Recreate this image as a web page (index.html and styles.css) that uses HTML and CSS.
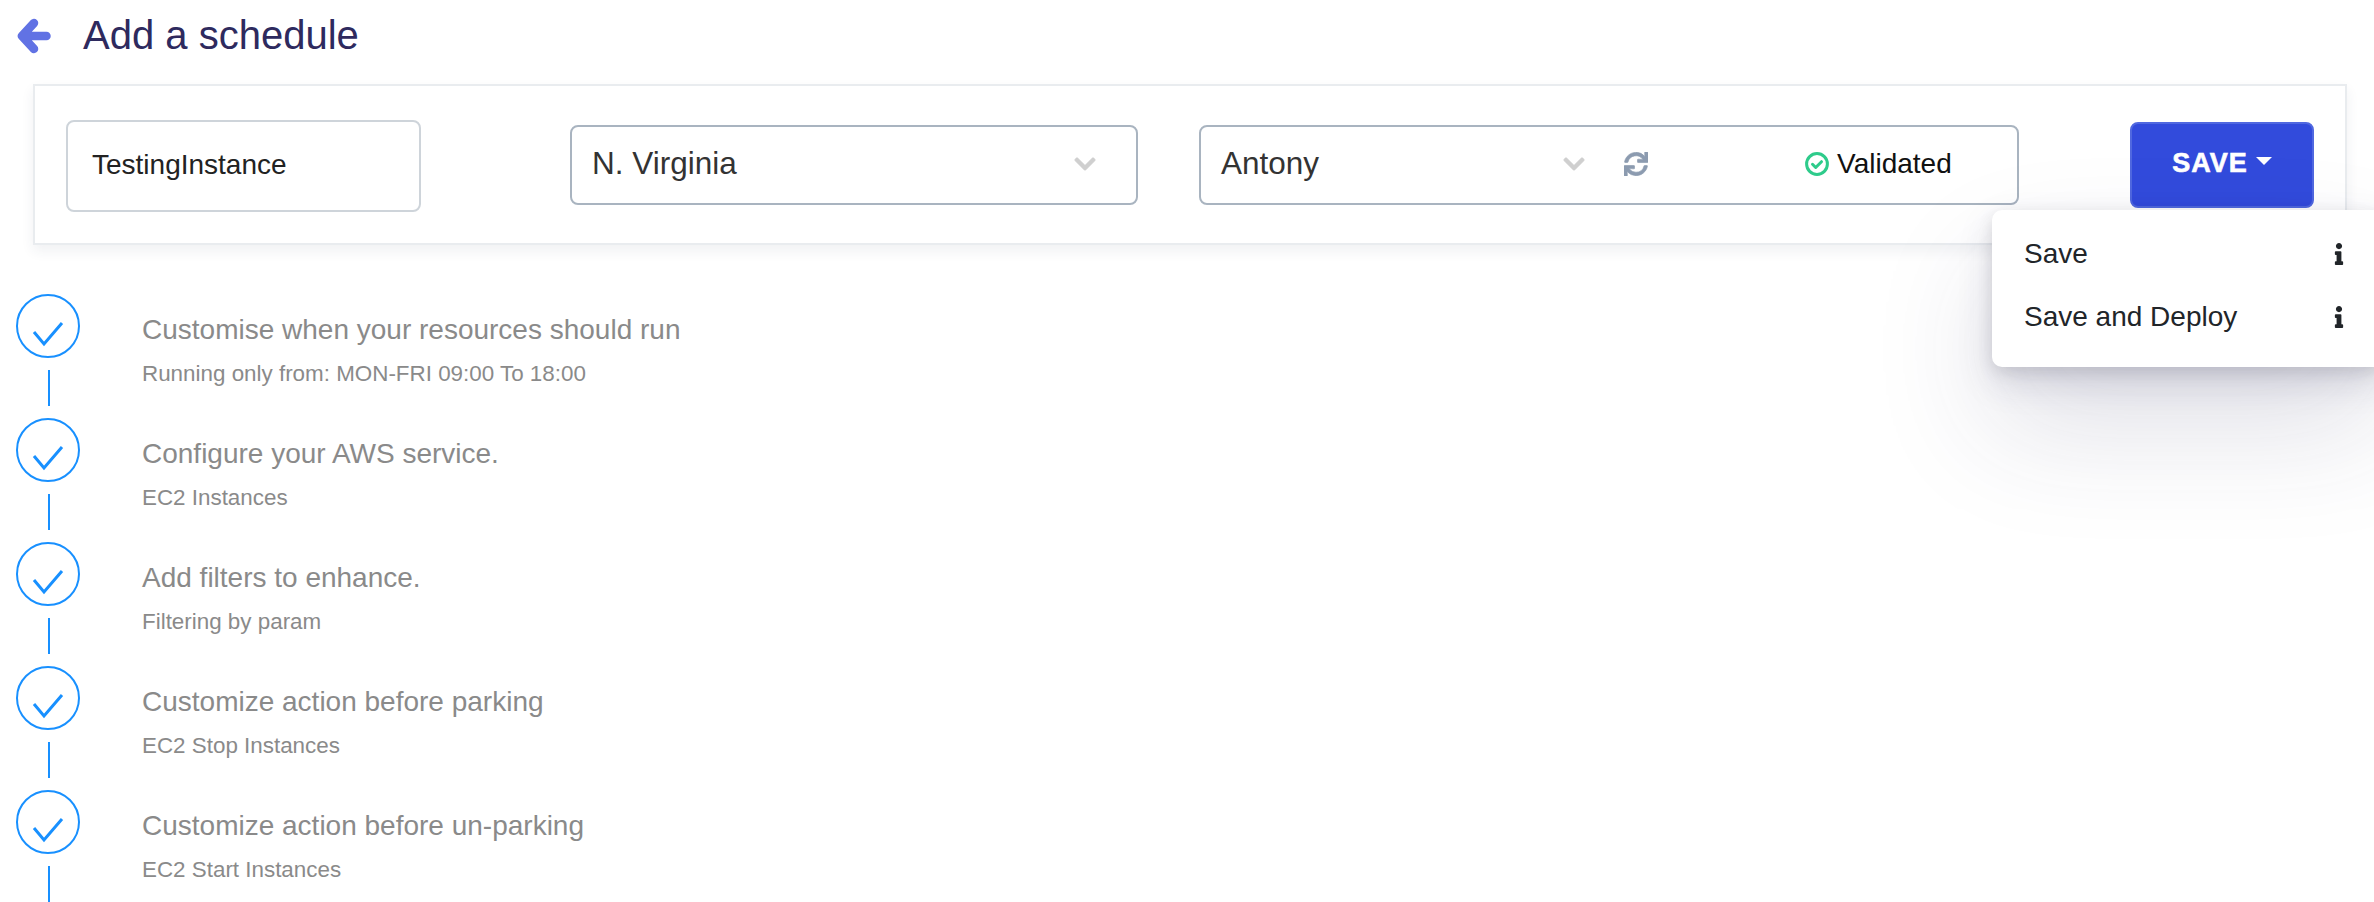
FILE: index.html
```html
<!DOCTYPE html>
<html lang="en">
<head>
<meta charset="utf-8">
<title>Add a schedule</title>
<link rel="stylesheet" href="styles.css">
</head>
<body>
<main class="page">
  <header class="head">
    <svg class="back" viewBox="0 0 34 36"><path d="M17 5L5 18l12 13M5 18h24.500"/></svg>
    <h1 class="title">Add a schedule</h1>
  </header>
  <section class="card">
    <div class="name-input">TestingInstance</div>
    <div class="select region">
      <span class="select-value">N. Virginia</span>
      <svg class="chev chev-region" viewBox="0 0 448 512"><path d="M207.029 381.476L12.686 187.132c-9.373-9.373-9.373-24.569 0-33.941l22.667-22.667c9.357-9.357 24.522-9.375 33.901-.04L224 284.505l154.745-154.021c9.379-9.335 24.544-9.317 33.901.04l22.667 22.667c9.373 9.373 9.373 24.569 0 33.941L240.971 381.476c-9.373 9.372-24.569 9.372-33.942 0z"/></svg>
    </div>
    <div class="select account">
      <span class="select-value">Antony</span>
      <svg class="chev chev-account" viewBox="0 0 448 512"><path d="M207.029 381.476L12.686 187.132c-9.373-9.373-9.373-24.569 0-33.941l22.667-22.667c9.357-9.357 24.522-9.375 33.901-.04L224 284.505l154.745-154.021c9.379-9.335 24.544-9.317 33.901.04l22.667 22.667c9.373 9.373 9.373 24.569 0 33.941L240.971 381.476c-9.373 9.372-24.569 9.372-33.942 0z"/></svg>
      <svg class="sync" viewBox="0 0 512 512"><path d="M440.65 12.57l4 82.77A247.16 247.16 0 0 0 255.83 8C134.73 8 33.91 94.92 12.29 209.82A12 12 0 0 0 24.09 224h49.05a12 12 0 0 0 11.67-9.26 175.91 175.91 0 0 1 317-56.94l-101.46-4.86a12 12 0 0 0-12.57 12v47.41a12 12 0 0 0 12 12H500a12 12 0 0 0 12-12V12a12 12 0 0 0-12-12h-47.37a12 12 0 0 0-11.98 12.57zM255.83 432a175.61 175.61 0 0 1-146-77.8l101.8 4.87a12 12 0 0 0 12.57-12v-47.4a12 12 0 0 0-12-12H12a12 12 0 0 0-12 12V500a12 12 0 0 0 12 12h47.35a12 12 0 0 0 12-12.6l-4.15-82.57A247.17 247.17 0 0 0 255.83 504c121.11 0 221.93-86.92 243.55-201.82a12 12 0 0 0-11.8-14.18h-49.05a12 12 0 0 0-11.67 9.26A175.86 175.86 0 0 1 255.83 432z"/></svg>
      <svg class="ok" viewBox="0 0 24 24"><circle cx="12" cy="12" r="10.400"/><path d="M7.500 12.300l3.200 3.200 5.800-5.800"/></svg>
      <span class="validated">Validated</span>
    </div>
    <button class="save" type="button">SAVE<span class="caret"></span></button>
  </section>
  <ol class="steps">
    <li class="step">
      <div class="rail"><span class="circle"><svg viewBox="0 0 60 60"><path d="M16 36l10 12 18-21"/></svg></span><span class="line"></span></div>
      <div class="step-text"><div class="step-title">Customise when your resources should run</div><div class="step-sub">Running only from: MON-FRI 09:00 To 18:00</div></div>
    </li>
    <li class="step">
      <div class="rail"><span class="circle"><svg viewBox="0 0 60 60"><path d="M16 36l10 12 18-21"/></svg></span><span class="line"></span></div>
      <div class="step-text"><div class="step-title">Configure your AWS service.</div><div class="step-sub">EC2 Instances</div></div>
    </li>
    <li class="step">
      <div class="rail"><span class="circle"><svg viewBox="0 0 60 60"><path d="M16 36l10 12 18-21"/></svg></span><span class="line"></span></div>
      <div class="step-text"><div class="step-title">Add filters to enhance.</div><div class="step-sub">Filtering by param</div></div>
    </li>
    <li class="step">
      <div class="rail"><span class="circle"><svg viewBox="0 0 60 60"><path d="M16 36l10 12 18-21"/></svg></span><span class="line"></span></div>
      <div class="step-text"><div class="step-title">Customize action before parking</div><div class="step-sub">EC2 Stop Instances</div></div>
    </li>
    <li class="step">
      <div class="rail"><span class="circle"><svg viewBox="0 0 60 60"><path d="M16 36l10 12 18-21"/></svg></span><span class="line"></span></div>
      <div class="step-text"><div class="step-title">Customize action before un-parking</div><div class="step-sub">EC2 Start Instances</div></div>
    </li>
  </ol>
  <div class="menu">
    <div class="menu-item"><span>Save</span><svg class="info" viewBox="0 0 192 512"><path d="M20 424.229h20V279.771H20c-11.046 0-20-8.954-20-20V212c0-11.046 8.954-20 20-20h112c11.046 0 20 8.954 20 20v212.229h20c11.046 0 20 8.954 20 20V492c0 11.046-8.954 20-20 20H20c-11.046 0-20-8.954-20-20v-47.771c0-11.046 8.954-20 20-20zM96 0C56.235 0 24 32.235 24 72s32.235 72 72 72 72-32.235 72-72S135.764 0 96 0z"/></svg></div>
    <div class="menu-item"><span>Save and Deploy</span><svg class="info" viewBox="0 0 192 512"><path d="M20 424.229h20V279.771H20c-11.046 0-20-8.954-20-20V212c0-11.046 8.954-20 20-20h112c11.046 0 20 8.954 20 20v212.229h20c11.046 0 20 8.954 20 20V492c0 11.046-8.954 20-20 20H20c-11.046 0-20-8.954-20-20v-47.771c0-11.046 8.954-20 20-20zM96 0C56.235 0 24 32.235 24 72s32.235 72 72 72 72-32.235 72-72S135.764 0 96 0z"/></svg></div>
  </div>
</main>
</body>
</html>
```
FILE: styles.css
```css
* { box-sizing: border-box; }
html, body { margin: 0; height: 100%; background: #fff; overflow: hidden; }
body { font-family: "Liberation Sans", Arial, sans-serif; color: #212529; }
.page { position: relative; width: 2374px; height: 902px; overflow: hidden; }

.head { display: flex; align-items: center; height: 84px; padding: 0 0 12px 17px; }
.back { width: 34px; height: 36px; fill: none; stroke: #6172e4; stroke-width: 8.500; stroke-linecap: round; stroke-linejoin: round; flex: none; }
.title { margin: 0 0 3px 32px; font-size: 40px; font-weight: 400; color: #2e2a5e; line-height: 1; }

.card { display: flex; align-items: center; height: 161px; margin: 0 27px 0 33px; padding: 0 31px; border: 2px solid #e9ecef; background: #fff; box-shadow: 0 6px 12px rgba(40, 50, 80, .07); }
.name-input { display: flex; align-items: center; width: 355px; height: 92px; margin-top: 3px; padding: 0 0 3px 24px; border: 2px solid #ced4da; border-radius: 8px; font-size: 28px; color: #222; flex: none; }
.select { display: flex; align-items: center; height: 80px; padding: 0 0 2px 20px; border: 2px solid #a9b4c0; border-radius: 8px; flex: none; }
.region { width: 568px; margin-left: 149px; }
.account { width: 820px; margin-left: 61px; }
.select-value { font-size: 31.500px; color: #333; }
.chev { width: 24px; height: 24px; fill: #cfcfcf; stroke: #cfcfcf; stroke-width: 14; flex: none; }
.chev-region { margin-left: auto; margin-right: 39px; }
.chev-account { margin-left: 243px; }
.sync { width: 24px; height: 24px; fill: #8c9bb0; stroke: #8c9bb0; stroke-width: 14; flex: none; margin-left: 38px; }
.ok { width: 24px; height: 24px; fill: none; stroke: #2ecb8b; stroke-width: 3; stroke-linecap: round; stroke-linejoin: round; flex: none; margin-left: 157px; }
.validated { font-size: 28px; color: #111; margin-left: 8px; }

.save { display: flex; align-items: center; justify-content: center; width: 184px; height: 86px; margin-left: 111px; flex: none; border: 2px solid #5068e0; border-radius: 8px; background: #324bdc; color: #fff; font: 700 27px "Liberation Sans", Arial, sans-serif; letter-spacing: 1px; -webkit-text-stroke: .6px #fff; padding: 0 0 3px; }
.caret { width: 0; height: 0; margin: 0 0 5px 8px; border: 8px solid transparent; border-top-color: #fff; border-bottom: 0; }

.steps { list-style: none; margin: 49px 0 0; padding: 0 0 0 16px; }
.step { display: flex; height: 124px; }
.rail { display: flex; flex-direction: column; align-items: center; width: 64px; flex: none; }
.circle { display: block; width: 64px; height: 64px; border: 2px solid #1890ff; border-radius: 50%; flex: none; }
.circle svg { display: block; width: 60px; height: 60px; fill: none; stroke: #1890ff; stroke-width: 3; }
.line { display: block; width: 2px; height: 36px; margin: 12px 0 0 2px; background: #1890ff; }
.step-text { margin-left: 62px; padding-top: 20px; }
.step-title { font-size: 28px; line-height: 32px; color: #8a8a8a; }
.step-sub { margin-top: 15px; font-size: 22.400px; line-height: 26px; color: #8a8a8a; }

.menu { position: absolute; top: 210px; left: 1992px; width: 392px; height: 157px; padding-top: 12px; background: #fff; border-radius: 10px; box-shadow: 0 60px 120px rgba(50, 50, 93, .15), 0 15px 35px rgba(50, 50, 93, .15), 0 5px 15px rgba(0, 0, 0, .1); }
.menu-item { display: flex; align-items: center; justify-content: space-between; height: 63px; padding: 0 40px 0 32px; font-size: 28px; color: #212529; }
.info { width: 10px; height: 22px; fill: #212529; }
```
